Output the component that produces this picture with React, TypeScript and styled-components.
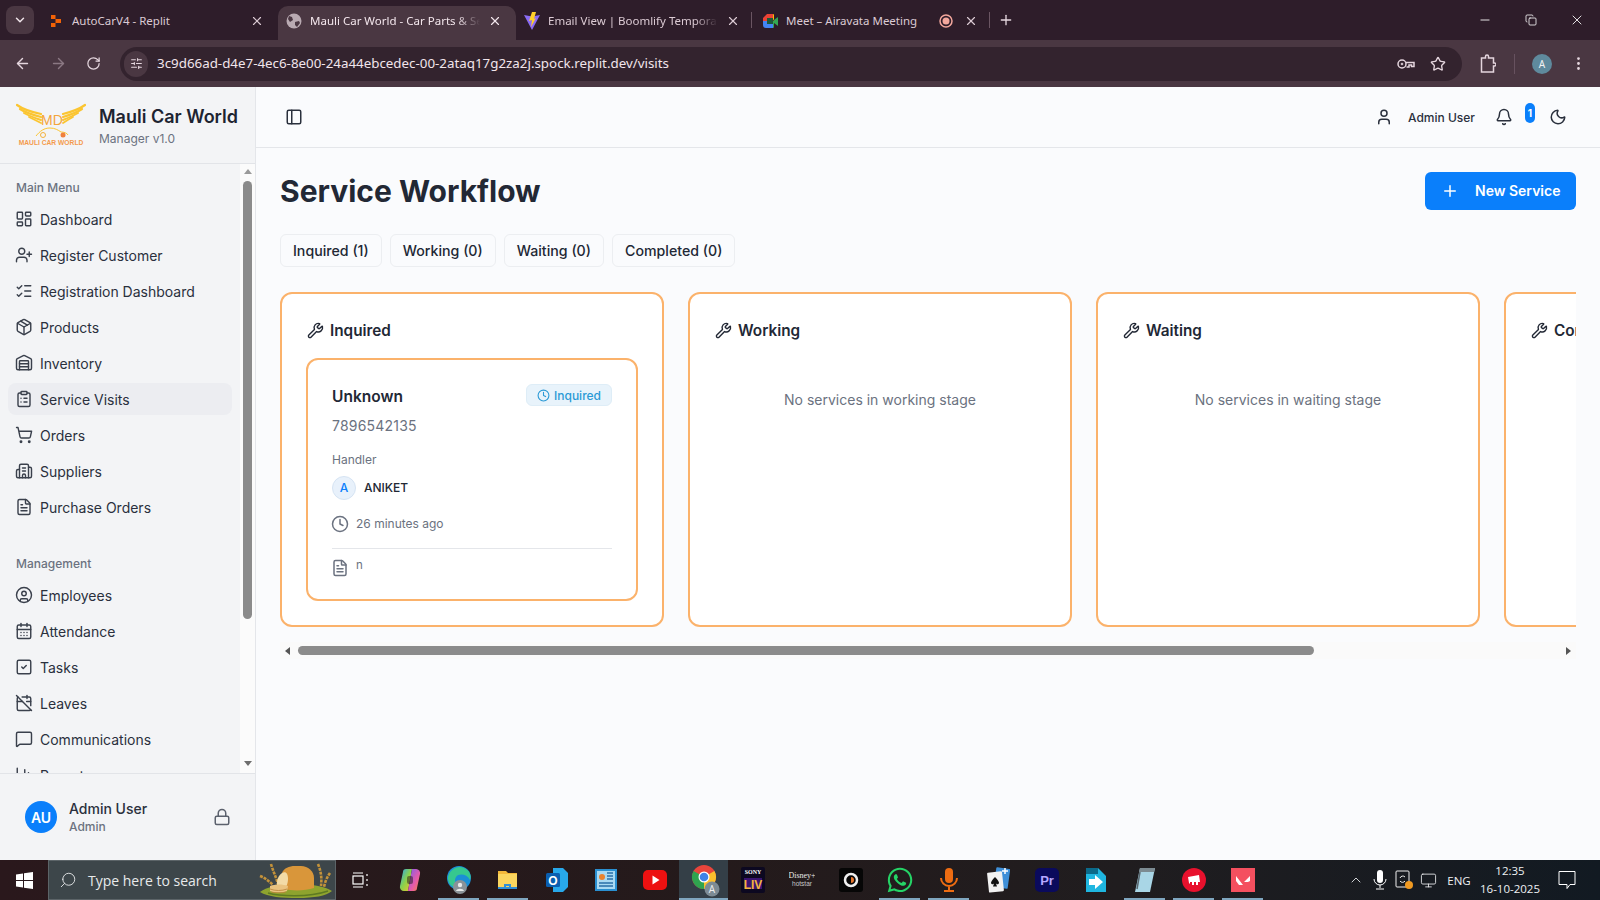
import React from 'react'
import styled, { createGlobalStyle } from 'styled-components'
import {
  ArrowLeft, ArrowRight, BarChart3, Bell, Building2, CalendarDays, CalendarOff, ChevronDown, ChevronUp,
  CircleUser, ClipboardList, Clock, FileText, LayoutDashboard, ListChecks, Lock, MessageSquare,
  Minus, Moon, MoreVertical, Package, PanelLeft, Plus, RotateCw, Monitor, ShoppingCart, SlidersHorizontal,
  SquareCheck, Star, User, UserPlus, Warehouse, Wrench, X, Copy, Search,
} from 'lucide-react'
import { FaWhatsapp } from 'react-icons/fa'

const GlobalStyle = createGlobalStyle`
  html, body { margin: 0; padding: 0; height: 100%; overflow: hidden; }
  body { font-family: Inter, "Liberation Sans", sans-serif; color: #222835; }
  * { box-sizing: border-box; }
`

const Screen = styled.div`
  width: 1600px;
  height: 900px;
  display: flex;
  flex-direction: column;
  overflow: hidden;
`

/* browser chrome */

const TabStrip = styled.div`
  height: 40px;
  flex: none;
  display: flex;
  align-items: flex-end;
  background: #2e1d2a;
  font-family: "Noto Sans", "Open Sans", sans-serif;
`

const TabSearch = styled.div`
  width: 28px;
  height: 28px;
  margin: 0 6px 6px 6px;
  border-radius: 8px;
  background: #4a3742;
  color: #f0e4ea;
  display: flex;
  align-items: center;
  justify-content: center;
`

const Tab = styled.div<{ $active?: boolean; $sep?: boolean }>`
  position: relative;
  width: 238px;
  height: 34px;
  padding: 0 14px 5px 8px;
  display: flex;
  align-items: center;
  gap: 8px;
  border-radius: 10px 10px 0 0;
  background: ${p => (p.$active ? '#4a3742' : 'transparent')};
  color: ${p => (p.$active ? '#f3e6ec' : '#dccbd4')};
  font-size: 11.5px;

  ${p => p.$sep && `
    &::after {
      content: '';
      position: absolute;
      right: 2px;
      top: 6px;
      height: 16px;
      width: 1px;
      background: #6a5562;
    }
  `}
`

const TabFav = styled.div`
  width: 16px;
  height: 16px;
  flex: none;
  display: flex;
  align-items: center;
  justify-content: center;
`

const TabTitle = styled.div<{ $fade?: boolean }>`
  flex: 1;
  min-width: 0;
  white-space: nowrap;
  overflow: hidden;
  ${p => p.$fade && `
    -webkit-mask-image: linear-gradient(to right, #000 86%, transparent 100%);
    mask-image: linear-gradient(to right, #000 86%, transparent 100%);
  `}
`

const RecordDot = styled.div`
  display: flex;
  margin-right: 3px;
`

const NewTab = styled.div`
  width: 28px;
  height: 28px;
  margin-bottom: 6px;
  display: flex;
  align-items: center;
  justify-content: center;
  color: #e6d8df;
`

const WindowControls = styled.div`
  margin-left: auto;
  height: 40px;
  display: flex;
  align-self: flex-start;
`

const WindowButton = styled.div`
  width: 46px;
  height: 40px;
  display: flex;
  align-items: center;
  justify-content: center;
  color: #ffffff;
`

const Toolbar = styled.div`
  height: 47px;
  flex: none;
  display: flex;
  align-items: center;
  padding-left: 3px;
  background: #4a3742;
  color: #e5d6de;
  font-family: "Noto Sans", "Open Sans", sans-serif;
`

const ToolButton = styled.div<{ $w?: number; $dim?: boolean }>`
  width: ${p => p.$w ?? 36}px;
  height: 34px;
  flex: none;
  display: flex;
  align-items: center;
  justify-content: center;
  color: ${p => (p.$dim ? '#8b7883' : 'inherit')};
`

const Omnibox = styled.div`
  width: 1342px;
  height: 34px;
  margin: 0 4px 0 9px;
  border-radius: 17px;
  background: #33232e;
  display: flex;
  align-items: center;
  padding: 0 8px 0 4px;
  flex: none;
`

const SiteChip = styled.div`
  width: 24px;
  height: 26px;
  border-radius: 13px;
  background: #4a3742;
  display: flex;
  align-items: center;
  justify-content: center;
  margin-right: 9px;
`

const Url = styled.div`
  flex: 1;
  font-size: 13.35px;
  padding-bottom: 2px;
  color: #f1e5eb;
`

const OmniIcon = styled.div`
  width: 32px;
  display: flex;
  justify-content: center;
  color: #e5d6de;
`

const ToolSep = styled.div`
  width: 1px;
  height: 20px;
  background: #67525f;
  margin: 0 17px 0 4px;
`

const ProfileDot = styled.div`
  width: 20px;
  height: 20px;
  border-radius: 50%;
  background: #5f8a9d;
  color: #f2f2f2;
  font-size: 10px;
  display: flex;
  align-items: center;
  justify-content: center;
  margin-right: 12px;
`

/* page */

const Page = styled.div`
  flex: 1;
  min-height: 0;
  display: flex;
  background: #fafbfd;
`

const Sidebar = styled.aside`
  width: 256px;
  flex: none;
  display: flex;
  flex-direction: column;
  background: #f3f4f6;
  border-right: 1px solid #e4e6ea;
`

const Brand = styled.div`
  height: 77px;
  flex: none;
  display: flex;
  align-items: center;
  padding-left: 16px;
  gap: 13px;
  border-bottom: 1px solid #e2e4e8;
`

const BrandText = styled.div`
  padding-top: 3px;
`

const BrandName = styled.div`
  font-size: 18px;
  font-weight: 600;
  line-height: 24px;
  color: #1d2431;
  white-space: nowrap;
`

const BrandSub = styled.div`
  font-size: 12px;
  line-height: 18px;
  margin-top: 1px;
  color: #6b7280;
`

const NavArea = styled.div`
  flex: 1;
  min-height: 0;
  display: flex;
`

const NavScroll = styled.nav`
  flex: 1;
  min-width: 0;
  overflow: hidden;
  padding: 16px 8px 0;
`

const NavLabel = styled.div`
  height: 16px;
  line-height: 16px;
  font-size: 12px;
  font-weight: 500;
  color: #6b7280;
  padding-left: 8px;
  margin-bottom: 7px;
`

const NavGroup = styled.div`
  display: flex;
  flex-direction: column;
  gap: 4px;
  margin-bottom: 33px;
`

const NavItem = styled.div<{ $active?: boolean }>`
  height: 32px;
  flex: none;
  display: flex;
  align-items: center;
  gap: 8px;
  padding-left: 8px;
  border-radius: 8px;
  font-size: 14px;
  color: #2a303d;
  background: ${p => (p.$active ? '#ecedf1' : 'transparent')};

  svg { flex: none; margin: 0 -1px; color: #3a404c; }
`

const VScroll = styled.div`
  width: 15px;
  flex: none;
  background: #fbfbfb;
  display: flex;
  flex-direction: column;
  align-items: center;
  padding: 5px 0 7px;
`

const ArrowUp = styled.div`
  border: 4px solid transparent;
  border-top: 0;
  border-bottom: 5px solid #9a9a9a;
`

const ArrowDown = styled.div`
  border: 4px solid transparent;
  border-bottom: 0;
  border-top: 5px solid #6e6e6e;
`

const VThumb = styled.div`
  width: 9px;
  height: 438px;
  margin: 7px 0 auto;
  border-radius: 5px;
  background: #8b8b8b;
`

const SideFoot = styled.div`
  height: 87px;
  flex: none;
  border-top: 1px solid #e2e4e8;
  display: flex;
  align-items: center;
  padding: 0 25px;
  gap: 12px;

  > svg { margin: 0 -1px; }
`

const FootAvatar = styled.div`
  width: 32px;
  height: 32px;
  border-radius: 50%;
  background: #0a7ffb;
  color: #fff;
  font-size: 14px;
  font-weight: 600;
  display: flex;
  align-items: center;
  justify-content: center;
`

const FootText = styled.div`
  flex: 1;
`

const FootName = styled.div`
  font-size: 14px;
  font-weight: 500;
  line-height: 18px;
  color: #2a303d;
`

const FootRole = styled.div`
  font-size: 12px;
  line-height: 17px;
  font-weight: 500;
  color: #6b7280;
`

const Main = styled.main`
  flex: 1;
  min-width: 0;
  display: flex;
  flex-direction: column;
`

const TopBar = styled.header`
  height: 61px;
  flex: none;
  display: flex;
  align-items: center;
  border-bottom: 1px solid #e4e6ea;
  padding: 0 33px 0 29px;
  color: #2a303d;
`

const TopUser = styled.div`
  margin-left: auto;
  margin-right: 21px;
  display: flex;
  align-items: center;
  gap: 15px;
  font-size: 12px;
  font-weight: 500;
`

const BellWrap = styled.div`
  position: relative;
  width: 16px;
  height: 16px;
  margin-right: 37px;

  svg { display: block; margin: -1px; }
`

const Badge = styled.div`
  position: absolute;
  left: 29px;
  top: -6px;
  width: 10px;
  height: 20px;
  border-radius: 5px;
  background: #0a7ffb;
  color: #fff;
  font-size: 10px;
  font-weight: 700;
  display: flex;
  align-items: center;
  justify-content: center;
`

const Content = styled.div`
  padding: 24px 24px 0;
  display: flex;
  flex-direction: column;
`

const TitleRow = styled.div`
  height: 38px;
  display: flex;
  align-items: center;
  justify-content: space-between;
`

const Title = styled.h1`
  margin: 0;
  font-size: 30px;
  font-weight: 700;
  color: #222835;
`

const NewButton = styled.div`
  width: 151px;
  height: 38px;
  border-radius: 6px;
  background: #0a7ffb;
  color: #fff;
  font-size: 14px;
  font-weight: 600;
  display: flex;
  align-items: center;
  padding: 0 0 1px 16px;
  gap: 16px;
`

const FilterRow = styled.div`
  margin-top: 24px;
  display: flex;
  gap: 8px;
`

const FilterTab = styled.div`
  height: 33px;
  padding: 0 12px;
  border: 1px solid #eceef1;
  border-radius: 6px;
  font-size: 14.2px;
  font-weight: 500;
  color: #222835;
  display: flex;
  align-items: center;
`

const Board = styled.div`
  margin-top: 25px;
  display: flex;
  gap: 24px;
  overflow: hidden;
`

const Column = styled.section`
  flex: 0 0 384px;
  height: 335px;
  padding: 24px;
  background: #fff;
  border: 2px solid #fbb26b;
  border-radius: 12px;
`

const ColumnHead = styled.div`
  height: 24px;
  display: flex;
  align-items: center;
  gap: 6px;
  font-size: 15.3px;
  font-weight: 600;
  color: #222835;
  white-space: nowrap;
  margin-bottom: 16px;

  svg { margin-left: 1px; }
`

const Empty = styled.div`
  margin-top: 48px;
  text-align: center;
  font-size: 14px;
  line-height: 20px;
  color: #6b7280;
`

const Card = styled.article`
  height: 243px;
  padding: 24px;
  border: 2px solid #fbb26b;
  border-radius: 12px;
`

const CardTop = styled.div`
  height: 22px;
  display: flex;
  align-items: center;
  justify-content: space-between;
`

const Customer = styled.div`
  font-size: 15.5px;
  font-weight: 600;
  padding-top: 2px;
  color: #222835;
`

const Status = styled.div`
  height: 22px;
  width: 86px;
  border: 1px solid #deedf7;
  border-radius: 6px;
  background: #e8f3fb;
  color: #2b9ad6;
  font-size: 12px;
  font-weight: 500;
  display: flex;
  align-items: center;
  justify-content: center;
  gap: 4px;
`

const Phone = styled.div`
  margin-top: 10px;
  font-size: 14px;
  line-height: 20px;
  color: #6b7280;
  letter-spacing: 0.2px;
`

const HandlerLabel = styled.div`
  margin-top: 16px;
  font-size: 12px;
  line-height: 16px;
  color: #6b7280;
`

const HandlerRow = styled.div`
  margin-top: 8px;
  height: 24px;
  display: flex;
  align-items: center;
  gap: 8px;
  font-size: 12px;
  line-height: 22px;
  font-weight: 500;
  color: #222835;
`

const HandlerAvatar = styled.div`
  width: 24px;
  height: 24px;
  border-radius: 50%;
  background: #e8f1fb;
  border: 1px solid #d6e4f3;
  color: #0a7ffb;
  font-size: 12px;
  display: flex;
  align-items: center;
  justify-content: center;
`

const MetaRow = styled.div`
  margin-top: 16px;
  height: 16px;
  display: flex;
  align-items: center;
  gap: 8px;
  font-size: 12px;
  line-height: 16px;
  color: #6b7280;

  svg { margin: 0 -1px; }
`

const Divider = styled.div`
  margin-top: 16px;
  height: 1px;
  background: #e4e6ea;
`

const NoteRow = styled.div`
  margin-top: 8px;
  display: flex;
  gap: 8px;
  font-size: 11.5px;
  line-height: 16px;
  color: #6b7280;

  svg { margin: 2px -1px 0; }
`

const HScroll = styled.div`
  margin-top: 15px;
  height: 17px;
  background: #fafafa;
  display: flex;
  align-items: center;
  padding: 0 5px;
`

const ArrowLeftTri = styled.div`
  border: 4px solid transparent;
  border-left: 0;
  border-right: 5px solid #555;
`

const ArrowRightTri = styled.div`
  border: 4px solid transparent;
  border-right: 0;
  border-left: 5px solid #555;
  margin-left: auto;
`

const HThumb = styled.div`
  width: 1016px;
  height: 9px;
  margin-left: 8px;
  border-radius: 5px;
  background: #8b8b8b;
`

/* windows taskbar */

const Taskbar = styled.div`
  height: 40px;
  flex: none;
  display: flex;
  align-items: center;
  background: linear-gradient(90deg, #2a181c 0%, #241a1b 45%, #201d1f 70%, #121a22 100%);
  color: #eef0f2;
  font-family: "Open Sans", "Noto Sans", sans-serif;
`

const StartButton = styled.div`
  width: 48px;
  height: 40px;
  display: flex;
  align-items: center;
  justify-content: center;
`

const SearchBox = styled.div`
  width: 288px;
  height: 40px;
  flex: none;
  background: #3d464a;
  border: 1px solid #5c6468;
  display: flex;
  align-items: center;
  padding-left: 10px;
  gap: 11px;
  font-size: 14px;
  color: #e8eaeb;
  position: relative;
`

const FlippedSearch = styled(Search)`
  transform: scaleX(-1);
`

const BreadArt = styled.div`
  position: absolute;
  right: 1px;
  top: 0;
  width: 76px;
  height: 38px;
`

const TaskSlot = styled.div<{ $active?: boolean; $running?: boolean }>`
  width: 49px;
  height: 40px;
  flex: none;
  position: relative;
  display: flex;
  align-items: center;
  justify-content: center;
  background: ${p => (p.$active ? '#343f47' : 'transparent')};

  ${p => (p.$running || p.$active) && `
    &::after {
      content: '';
      position: absolute;
      bottom: 0;
      left: ${p.$active ? 0 : 4}px;
      right: ${p.$active ? 0 : 4}px;
      height: 2px;
      background: #7fa6bf;
    }
  `}
`

const Tray = styled.div`
  margin-left: auto;
  display: flex;
  align-items: center;
  height: 40px;
  font-size: 11.5px;
`

const TrayIcon = styled.div`
  width: 24px;
  display: flex;
  justify-content: center;
`

const Lang = styled.div`
  width: 38px;
  text-align: center;
`

const ClockBox = styled.div`
  width: 64px;
  text-align: center;
  line-height: 18px;
`

const NotifyBox = styled.div`
  width: 42px;
  margin: 0 12px 0 4px;
  display: flex;
  justify-content: center;
`

/* drawings */

const ReplitIcon = () => (
  <svg width="12" height="14" viewBox="0 0 12 14">
    <path d="M1 1h4.500v4H1zM5.500 5H11v4H5.500zM1 9h4.500v4H1z" fill="#f26207" />
  </svg>
)

const GlobeIcon = () => (
  <svg width="16" height="16" viewBox="0 0 16 16">
    <circle cx="8" cy="8" r="7.500" fill="#b9aab2" />
    <path d="M3 3l3 1 1 3-3 2-2-3zM9 9l4-1 1 2-3 4-2-2z" fill="#4a3742" />
  </svg>
)

const ViteIcon = () => (
  <svg width="16" height="18" viewBox="0 0 16 18">
    <path d="M0 3l8 1.500L16 3 8 18z" fill="#8a6cf5" />
    <path d="M8 0l4 0-2 7 2-1-5 9 1-7-3 1z" fill="#ffd028" />
  </svg>
)

const MeetIcon = () => (
  <svg width="16" height="16" viewBox="0 0 16 16">
    <path d="M1 5l4-4h6v4H5v3H1z" fill="#ea4335" />
    <path d="M1 8h4v3h6v4H4a3 3 0 0 1-3-3z" fill="#4285f4" />
    <path d="M11 1a1 1 0 0 1 1 1v4l-1 2-6 0V5h6z" fill="#fbbc04" />
    <path d="M11 8l1 0v6a1 1 0 0 1-1 1z" fill="#34a853" />
    <path d="M12 7l4-3v9l-4-3z" fill="#34a853" />
    <rect x="5" y="5" width="6" height="6" fill="#1c5a3a" />
  </svg>
)

const RecordIcon = () => (
  <svg width="14" height="14" viewBox="0 0 14 14">
    <circle cx="7" cy="7" r="6" fill="none" stroke="#f3a79d" strokeWidth="1.500" />
    <circle cx="7" cy="7" r="3.500" fill="#f3a79d" />
  </svg>
)

const PasswordKey = () => (
  <svg width="18" height="12" viewBox="0 0 18 12" fill="none" stroke="currentColor" strokeWidth="1.500">
    <circle cx="5" cy="6" r="4" />
    <circle cx="5" cy="6" r="1" fill="currentColor" strokeWidth="0.500" />
    <path d="M9 4.500h8v4h-2.500V7H12v2H9.500" />
  </svg>
)

const ExtensionIcon = () => (
  <svg width="16" height="20" viewBox="0 0 16 20" fill="none" stroke="currentColor" strokeWidth="1.500">
    <path d="M1.500 4h4V2.500a1.500 1.500 0 0 1 3 0V4h5v5h1a1.500 1.500 0 0 1 0 3h-1v6h-12z" />
  </svg>
)

const Logo = () => (
  <svg width="70" height="44" viewBox="0 0 70 44">
    <g fill="none" stroke="#fbc531" strokeLinecap="round">
      <path d="M1 2C8 7 15 9 25 11" strokeWidth="2.200" />
      <path d="M4 6C10 10 17 12 25 14" strokeWidth="2.200" />
      <path d="M8 10C13 13 19 15 25 17" strokeWidth="2" />
      <path d="M13 14C17 16 21 18 25 20" strokeWidth="1.800" />
      <path d="M69 2C62 7 55 9 47 11" strokeWidth="2.200" />
      <path d="M66 6C60 10 54 12 47 14" strokeWidth="2.200" />
      <path d="M62 10C57 13 52 15 47 17" strokeWidth="2" />
      <path d="M57 14C53 16 50 18 47 20" strokeWidth="1.800" />
    </g>
    <text x="36" y="22" textAnchor="middle" fontFamily="Liberation Sans, sans-serif" fontSize="14" fill="#f3a53c">MD</text>
    <path d="M20 33c4-5 8-8 14-8 5 0 8 2 11 4 3 0 6 1 7 3" fill="none" stroke="#fbc531" strokeWidth="1" />
    <circle cx="27" cy="32" r="2.500" fill="none" stroke="#f3b23c" />
    <circle cx="47" cy="32" r="2.500" fill="#f0803c" />
    <text x="35" y="42" textAnchor="middle" fontFamily="Liberation Sans, sans-serif" fontSize="6.700" fontWeight="700" fill="#f39a4c">MAULI CAR WORLD</text>
  </svg>
)

const WinLogo = () => (
  <svg width="17" height="17" viewBox="0 0 17 17">
    <path d="M0 2.400l7-1V8H0zM8 1.200L17 0v8H8zM0 9h7v6.600l-7-1zM8 9h9v8l-9-1.200z" fill="#fff" />
  </svg>
)

const Bread = () => (
  <svg width="76" height="38" viewBox="0 0 76 38">
    <path d="M2 31c10-7 22-7 34-6 14-2 28-1 38 5-6 5-18 7-34 7-16 0-30-1-38-6z" fill="#8ea32e" />
    <path d="M10 32c10 3 40 5 60-2" stroke="#5e7a22" strokeWidth="1.500" fill="none" />
    <g stroke="#c4923a" strokeWidth="2.600" strokeDasharray="3 1" fill="none">
      <path d="M13 3c2 7 5 13 7 20" />
      <path d="M2 15c5 2 9 5 13 9" />
      <path d="M60 3c3 7 4 14 3 22" />
      <path d="M72 12c-3 4-5 9-6 14" />
    </g>
    <path d="M24 12c2-5 7-7 13-7h6c7 0 13 5 13 12v10c-9 3-22 3-30 1z" fill="#d9963a" />
    <path d="M24 12c-5 3-7 12-3 17 7 0 9-6 9-11s-2-8-6-6z" fill="#f3dba6" />
    <path d="M12 25c5-2 13-2 18 0l-1 5c-5 2-12 2-17 0z" fill="#eac380" />
    <path d="M12 28c5 2 12 2 17 0M13 31c5 1 11 1 15 0" stroke="#b98238" strokeWidth="0.800" fill="none" />
  </svg>
)

const TaskView = () => (
  <svg width="18" height="18" viewBox="0 0 18 18" fill="none" stroke="#fff" strokeWidth="1.200">
    <rect x="1" y="5" width="10" height="8" />
    <path d="M1 2h10M1 16h10M15 3v2M15 8v2M15 13v2" />
  </svg>
)

const Copilot = () => (
  <svg width="24" height="24" viewBox="0 0 24 24">
    <defs>
      <linearGradient id="cp1" x1="0" y1="0" x2="1" y2="1">
        <stop offset="0" stopColor="#2aa7f0" />
        <stop offset="0.5" stopColor="#8bd24a" />
        <stop offset="1" stopColor="#f6c12f" />
      </linearGradient>
      <linearGradient id="cp2" x1="0" y1="0" x2="1" y2="1">
        <stop offset="0" stopColor="#7b5cf0" />
        <stop offset="0.6" stopColor="#e85ba8" />
        <stop offset="1" stopColor="#f58a3c" />
      </linearGradient>
    </defs>
    <path d="M8 1h6l-4 22H6a4 4 0 0 1-4-5L5 4a3 3 0 0 1 3-3z" fill="url(#cp1)" />
    <path d="M16 23h-6l4-22h4a4 4 0 0 1 4 5l-3 14a3 3 0 0 1-3 3z" fill="url(#cp2)" />
    <rect x="9" y="8" width="6" height="8" rx="2" fill="#241a1b" opacity="0.5" />
  </svg>
)

const Edge = () => (
  <svg width="26" height="30" viewBox="0 0 26 30">
    <circle cx="13" cy="13" r="12" fill="#1b8fd6" />
    <path d="M2 12C4 4 12 0 18 3c5 2 8 7 6 12-3-6-11-7-14-3-2 3-1 8 3 11-6 1-12-5-11-11z" fill="#36c88f" />
    <circle cx="14" cy="22" r="7" fill="#8a9298" />
    <circle cx="14" cy="20" r="2.200" fill="#e7e9ea" />
    <path d="M10 26c1-3 7-3 8 0z" fill="#e7e9ea" />
  </svg>
)

const Explorer = () => (
  <svg width="24" height="24" viewBox="0 0 24 24">
    <path d="M2 3h8l2 2h9v16H2z" fill="#f4b93a" />
    <rect x="2" y="6" width="19" height="15" fill="#fbd65f" />
    <path d="M8 21v-5h7v5h-2v-3h-3v3z" fill="#2f8fd8" />
    <rect x="2" y="19" width="19" height="2" fill="#2f8fd8" />
  </svg>
)

const Outlook = () => (
  <svg width="24" height="26" viewBox="0 0 24 26">
    <path d="M8 1h10l5 5v14l-5 5H8z" fill="#28a8ea" />
    <rect x="1" y="6" width="14" height="14" rx="1.500" fill="#0a5fb0" />
    <text x="8" y="17.500" textAnchor="middle" fontFamily="Liberation Sans, sans-serif" fontSize="12" fontWeight="700" fill="#fff">O</text>
  </svg>
)

const Panel = () => (
  <svg width="22" height="24" viewBox="0 0 22 24">
    <rect x="0" y="1" width="22" height="22" fill="#2a8fd0" />
    <rect x="2" y="3" width="18" height="18" fill="#a9d9f2" />
    <circle cx="7" cy="9" r="3" fill="#e9822e" />
    <path d="M12 5h6M12 8h6M12 11h6M4 15h14M4 18h14" stroke="#2a6fa8" strokeWidth="1.300" />
  </svg>
)

const YouTube = () => (
  <svg width="24" height="24" viewBox="0 0 24 24">
    <rect x="0" y="2" width="24" height="20" rx="5" fill="#ed1111" />
    <path d="M9.500 7.500l7 4.500-7 4.500z" fill="#fff" />
  </svg>
)

const Chrome = () => (
  <svg width="32" height="34" viewBox="0 0 32 34">
    <circle cx="16" cy="14" r="12" fill="#e8453c" />
    <path d="M16 14L5.600 8A12 12 0 0 0 16 26z" fill="#2fa44f" />
    <path d="M16 14l10.400-6A12 12 0 0 1 16 26z" fill="#fbc02d" />
    <circle cx="16" cy="14" r="5.500" fill="#fff" />
    <circle cx="16" cy="14" r="4.300" fill="#3f83e8" />
    <circle cx="24" cy="26" r="7.500" fill="#7d8b94" />
    <text x="24" y="29.500" textAnchor="middle" fontFamily="Open Sans, sans-serif" fontSize="10" fill="#f0f0f0">A</text>
  </svg>
)

const SonyLiv = () => (
  <svg width="24" height="26" viewBox="0 0 24 26">
    <rect width="24" height="26" rx="2" fill="#0c0820" />
    <text x="12" y="7" textAnchor="middle" fontFamily="Liberation Serif, serif" fontSize="6" fontWeight="700" fill="#fff">SONY</text>
    <path d="M3 22V11c6 0 13 0 18 0v11z" fill="#3a1470" />
    <text x="12" y="22" textAnchor="middle" fontFamily="Liberation Sans, sans-serif" fontSize="12" fontWeight="700" fill="#f4b43c">LIV</text>
  </svg>
)

const Hotstar = () => (
  <svg width="26" height="24" viewBox="0 0 26 24">
    <text x="13" y="10" textAnchor="middle" fontFamily="Liberation Serif, serif" fontSize="8" fill="#e8e8e8">Disney+</text>
    <text x="13" y="18" textAnchor="middle" fontFamily="Liberation Sans, sans-serif" fontSize="6.500" fill="#c8c8c8">hotstar</text>
  </svg>
)

const BlackC = () => (
  <svg width="24" height="24" viewBox="0 0 24 24">
    <rect width="24" height="24" rx="3" fill="#060606" />
    <circle cx="12" cy="12" r="6" fill="none" stroke="#f0f0f0" strokeWidth="2.500" />
    <path d="M12 9a3 3 0 0 1 0 6z" fill="#e8762c" />
  </svg>
)

const MicApp = () => (
  <svg width="24" height="26" viewBox="0 0 24 26">
    <rect x="8" y="1" width="8" height="15" rx="4" fill="#ee6c12" />
    <path d="M4 11a8 8 0 0 0 16 0M12 19v4M7 24h10" fill="none" stroke="#ee6c12" strokeWidth="2" />
  </svg>
)

const Cards = () => (
  <svg width="24" height="26" viewBox="0 0 24 26">
    <rect x="9" y="1" width="14" height="20" rx="1" fill="#3e8fd8" transform="rotate(8 16 11)" />
    <rect x="2" y="5" width="15" height="20" rx="1" fill="#f2f2f2" transform="rotate(-6 9 15)" />
    <path d="M9 10c3 3 4 5 4 6s-2 2-3 .500l1 3H7l1-3c-1 1.500-3 .500-3-.500s1-3 4-6z" fill="#111" />
    <path d="M19 1v6M16 4h6" stroke="#fff" strokeWidth="1.500" />
  </svg>
)

const Premiere = () => (
  <svg width="24" height="24" viewBox="0 0 24 24">
    <rect width="24" height="24" rx="5" fill="#0a0a5c" />
    <text x="12" y="17" textAnchor="middle" fontFamily="Liberation Sans, sans-serif" fontSize="13" fontWeight="700" fill="#b6a8ff">Pr</text>
  </svg>
)

const DocArrow = () => (
  <svg width="24" height="26" viewBox="0 0 24 26">
    <path d="M2 1h12l8 8v16H2z" fill="#1fb6e0" />
    <path d="M2 1h12v6H2z" fill="#0b6a8a" />
    <path d="M5 12h6V8l8 7-8 7v-4H5z" fill="#fff" />
  </svg>
)

const Note = () => (
  <svg width="24" height="26" viewBox="0 0 24 26">
    <path d="M7 1h15l-5 24H2z" fill="#a9d6e6" />
    <path d="M7 1h15l-1 4H6z" fill="#7c8b92" />
    <path d="M4 22L7 5" stroke="#58666e" strokeWidth="1.500" />
  </svg>
)

const Riot = () => (
  <svg width="24" height="24" viewBox="0 0 24 24">
    <circle cx="12" cy="12" r="12" fill="#e8112d" />
    <path d="M6 9l11-2 1 7-2 0v3h-2v-3h-2v3h-2v-3H8v2l-1-1z" fill="#fff" />
  </svg>
)

const Valorant = () => (
  <svg width="24" height="24" viewBox="0 0 24 24">
    <rect width="24" height="24" fill="#f4505f" />
    <path d="M5 8l7 9H8L5 13zM19 8v5l-2 1h-4z" fill="#fff" />
  </svg>
)

const TrayMic = () => (
  <svg width="14" height="20" viewBox="0 0 14 20">
    <rect x="4" y="0" width="6" height="13" rx="3" fill="#fff" />
    <path d="M1 9a6 6 0 0 0 12 0M7 15v3M3 19h8" fill="none" stroke="#fff" />
  </svg>
)

const TrayPad = () => (
  <svg width="20" height="20" viewBox="0 0 20 20">
    <rect x="2" y="1" width="13" height="16" rx="1" fill="none" stroke="#f0f0f0" />
    <path d="M6 8a3 3 0 0 1 5-1M11 11a3 3 0 0 1-5 0" fill="none" stroke="#f0f0f0" />
    <circle cx="15" cy="15" r="4" fill="#f09a22" />
  </svg>
)

const Speech = () => (
  <svg width="20" height="20" viewBox="0 0 20 20" fill="none" stroke="#fff">
    <path d="M2 1.500h16v13h-5l-3 4v-4H2z" />
  </svg>
)

const menu = [
  { label: 'Dashboard', icon: LayoutDashboard },
  { label: 'Register Customer', icon: UserPlus },
  { label: 'Registration Dashboard', icon: ListChecks },
  { label: 'Products', icon: Package },
  { label: 'Inventory', icon: Warehouse },
  { label: 'Service Visits', icon: ClipboardList, active: true },
  { label: 'Orders', icon: ShoppingCart },
  { label: 'Suppliers', icon: Building2 },
  { label: 'Purchase Orders', icon: FileText },
]

const management = [
  { label: 'Employees', icon: CircleUser },
  { label: 'Attendance', icon: CalendarDays },
  { label: 'Tasks', icon: SquareCheck },
  { label: 'Leaves', icon: CalendarOff },
  { label: 'Communications', icon: MessageSquare },
  { label: 'Reports', icon: BarChart3 },
]

const taskApps = [
  { node: <TaskView /> },
  { node: <Copilot /> },
  { node: <Edge />, running: true },
  { node: <Explorer />, running: true },
  { node: <Outlook /> },
  { node: <Panel /> },
  { node: <YouTube /> },
  { node: <Chrome />, active: true },
  { node: <SonyLiv /> },
  { node: <Hotstar /> },
  { node: <BlackC /> },
  { node: <FaWhatsapp size={28} color="#25d366" />, running: true },
  { node: <MicApp />, running: true },
  { node: <Cards /> },
  { node: <Premiere /> },
  { node: <DocArrow /> },
  { node: <Note />, running: true },
  { node: <Riot />, running: true },
  { node: <Valorant />, running: true },
]

function App() {
  return (
    <Screen>
      <GlobalStyle />
      <TabStrip>
        <TabSearch><ChevronDown size={14} strokeWidth={2.5} /></TabSearch>
        <Tab>
          <TabFav><ReplitIcon /></TabFav>
          <TabTitle>AutoCarV4 - Replit</TabTitle>
          <X size={14} />
        </Tab>
        <Tab $active>
          <TabFav><GlobeIcon /></TabFav>
          <TabTitle $fade>Mauli Car World - Car Parts &amp; Service</TabTitle>
          <X size={14} />
        </Tab>
        <Tab $sep>
          <TabFav><ViteIcon /></TabFav>
          <TabTitle $fade>Email View | Boomlify Temporary Mail</TabTitle>
          <X size={14} />
        </Tab>
        <Tab $sep>
          <TabFav><MeetIcon /></TabFav>
          <TabTitle>Meet – Airavata Meeting</TabTitle>
          <RecordDot><RecordIcon /></RecordDot>
          <X size={14} />
        </Tab>
        <NewTab><Plus size={16} /></NewTab>
        <WindowControls>
          <WindowButton><Minus size={14} strokeWidth={1.5} /></WindowButton>
          <WindowButton><Copy size={12} strokeWidth={1.6} /></WindowButton>
          <WindowButton><X size={16} strokeWidth={1.3} /></WindowButton>
        </WindowControls>
      </TabStrip>

      <Toolbar>
        <ToolButton $w={38}><ArrowLeft size={17} /></ToolButton>
        <ToolButton $w={34} $dim><ArrowRight size={17} /></ToolButton>
        <ToolButton><RotateCw size={15} /></ToolButton>
        <Omnibox>
          <SiteChip><SlidersHorizontal size={13} /></SiteChip>
          <Url>3c9d66ad-d4e7-4ec6-8e00-24a44ebcedec-00-2ataq17g2za2j.spock.replit.dev/visits</Url>
          <OmniIcon><PasswordKey /></OmniIcon>
          <OmniIcon><Star size={16} /></OmniIcon>
        </Omnibox>
        <ToolButton $w={44}><ExtensionIcon /></ToolButton>
        <ToolSep />
        <ProfileDot>A</ProfileDot>
        <ToolButton $w={28}><MoreVertical size={17} /></ToolButton>
      </Toolbar>

      <Page>
        <Sidebar>
          <Brand>
            <Logo />
            <BrandText>
              <BrandName>Mauli Car World</BrandName>
              <BrandSub>Manager v1.0</BrandSub>
            </BrandText>
          </Brand>
          <NavArea>
            <NavScroll>
              <NavLabel>Main Menu</NavLabel>
              <NavGroup>
                {menu.map(({ label, icon: Icon, active }) => (
                  <NavItem key={label} $active={active}><Icon size={18} strokeWidth={1.9} />{label}</NavItem>
                ))}
              </NavGroup>
              <NavLabel>Management</NavLabel>
              <NavGroup>
                {management.map(({ label, icon: Icon }) => (
                  <NavItem key={label}><Icon size={18} strokeWidth={1.9} />{label}</NavItem>
                ))}
              </NavGroup>
            </NavScroll>
            <VScroll>
              <ArrowUp />
              <VThumb />
              <ArrowDown />
            </VScroll>
          </NavArea>
          <SideFoot>
            <FootAvatar>AU</FootAvatar>
            <FootText>
              <FootName>Admin User</FootName>
              <FootRole>Admin</FootRole>
            </FootText>
            <Lock size={18} color="#5b616d" />
          </SideFoot>
        </Sidebar>

        <Main>
          <TopBar>
            <PanelLeft size={18} />
            <TopUser><User size={18} />Admin User</TopUser>
            <BellWrap>
              <Bell size={18} />
              <Badge>1</Badge>
            </BellWrap>
            <Moon size={18} />
          </TopBar>
          <Content>
            <TitleRow>
              <Title>Service Workflow</Title>
              <NewButton><Plus size={18} />New Service</NewButton>
            </TitleRow>
            <FilterRow>
              <FilterTab>Inquired (1)</FilterTab>
              <FilterTab>Working (0)</FilterTab>
              <FilterTab>Waiting (0)</FilterTab>
              <FilterTab>Completed (0)</FilterTab>
            </FilterRow>
            <Board>
              <Column>
                <ColumnHead><Wrench size={17} />Inquired</ColumnHead>
                <Card>
                  <CardTop>
                    <Customer>Unknown</Customer>
                    <Status><Clock size={13} />Inquired</Status>
                  </CardTop>
                  <Phone>7896542135</Phone>
                  <HandlerLabel>Handler</HandlerLabel>
                  <HandlerRow>
                    <HandlerAvatar>A</HandlerAvatar>
                    ANIKET
                  </HandlerRow>
                  <MetaRow><Clock size={18} />26 minutes ago</MetaRow>
                  <Divider />
                  <NoteRow><FileText size={18} />n</NoteRow>
                </Card>
              </Column>
              <Column>
                <ColumnHead><Wrench size={17} />Working</ColumnHead>
                <Empty>No services in working stage</Empty>
              </Column>
              <Column>
                <ColumnHead><Wrench size={17} />Waiting</ColumnHead>
                <Empty>No services in waiting stage</Empty>
              </Column>
              <Column>
                <ColumnHead><Wrench size={17} />Completed</ColumnHead>
              </Column>
            </Board>
            <HScroll>
              <ArrowLeftTri />
              <HThumb />
              <ArrowRightTri />
            </HScroll>
          </Content>
        </Main>
      </Page>

      <Taskbar>
        <StartButton><WinLogo /></StartButton>
        <SearchBox>
          <FlippedSearch size={18} strokeWidth={1.2} />
          Type here to search
          <BreadArt><Bread /></BreadArt>
        </SearchBox>
        {taskApps.map((app, i) => (
          <TaskSlot key={i} $active={app.active} $running={app.running}>{app.node}</TaskSlot>
        ))}
        <Tray>
          <TrayIcon><ChevronUp size={16} strokeWidth={1.3} /></TrayIcon>
          <TrayIcon><TrayMic /></TrayIcon>
          <TrayIcon><TrayPad /></TrayIcon>
          <TrayIcon><Monitor size={17} strokeWidth={1.2} /></TrayIcon>
          <Lang>ENG</Lang>
          <ClockBox>12:35<br />16-10-2025</ClockBox>
          <NotifyBox><Speech /></NotifyBox>
        </Tray>
      </Taskbar>
    </Screen>
  )
}

export default App
